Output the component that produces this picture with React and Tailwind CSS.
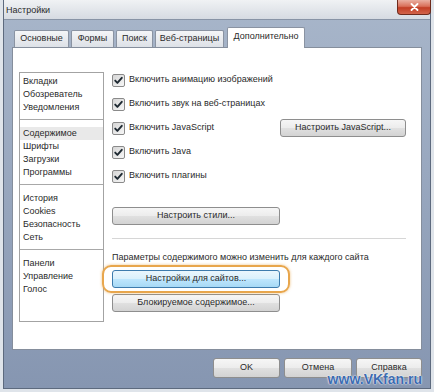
import React from "react";

function Check() {
  return (
    <div className="w-[13px] h-[13px] shrink-0 border border-[#8a8a8a] rounded-[2px] bg-gradient-to-br from-[#d6d6d6] to-[#f7f7f7] flex items-center justify-center">
      <svg width="11" height="11" viewBox="0 0 11 11">
        <path d="M2.2 5.6 L4.4 7.9 L8.8 2.8" fill="none" stroke="#1f2a33" strokeWidth="1.9" strokeLinecap="round" strokeLinejoin="round" />
      </svg>
    </div>
  );
}

function Btn({ children, className = "", blue = false }) {
  return (
    <div
      className={
        "h-[18px] flex items-center justify-center whitespace-nowrap rounded-[3px] border " +
        (blue
          ? "border-[#3d7bad] bg-[linear-gradient(#eaf6fd_0%,#d9f0fc_50%,#bee6fd_51%,#a7d9f5_100%)] "
          : "border-[#8e8e8e] bg-[linear-gradient(#f6f6f6_0%,#ececec_50%,#e0e0e0_51%,#d3d3d3_100%)] ") +
        className
      }
    >
      {children}
    </div>
  );
}

function Row({ children }) {
  return <div className="h-[24px] flex items-center whitespace-nowrap">{children}</div>;
}

const sections = [
  ["Вкладки", "Обозреватель", "Уведомления"],
  ["Содержимое", "Шрифты", "Загрузки", "Программы"],
  ["История", "Cookies", "Безопасность", "Сеть"],
  ["Панели", "Управление", "Голос"],
];

const tabCls =
  "h-[17px] mb-px border border-b-0 border-[#8a93a2] rounded-t-[2px] bg-gradient-to-b from-[#f4f5f7] to-[#dde1e7] flex items-center justify-center whitespace-nowrap";

export default function App() {
  return (
    <div className="w-[434px] h-[392px] bg-[#dfe4ea] px-[3px] pb-[3px] font-['Liberation_Sans',sans-serif] text-[9px] text-[#2a2a2a] relative overflow-hidden">
      <div className="h-full flex flex-col border border-t-0 border-[#5d6a7e] bg-gradient-to-b from-[#a8b6ca] to-[#8696b1]">
        {/* Title bar */}
        <div className="h-[20px] shrink-0 flex items-start justify-between bg-gradient-to-b from-[#f0f2f4] to-[#d6dbe2] border-b border-[#8894a6]">
          <span className="pl-[2px] pt-[4px] leading-[12px]">Настройки</span>
          <div className="w-[34px] h-[15px] -mr-px rounded-b-[4px] border border-t-0 border-[#6e2a1c] bg-[linear-gradient(#eab0a2_0%,#d9705a_45%,#c23e25_55%,#d2644a_100%)] flex items-center justify-center">
            <svg width="9" height="8" viewBox="0 0 9 8">
              <path d="M1.5 1 L7.5 7 M7.5 1 L1.5 7" stroke="#ffffff" strokeWidth="1.8" strokeLinecap="round" />
            </svg>
          </div>
        </div>

        {/* Body */}
        <div className="flex-1 flex flex-col px-[8px] pt-[7px]">
          {/* Tabs */}
          <div className="h-[21px] -mb-px flex items-end pl-[2px] relative z-10">
            <div className={tabCls + " w-[55px]"}>Основные</div>
            <div className={tabCls + " w-[43px] ml-[2px]"}>Формы</div>
            <div className={tabCls + " w-[37px] ml-[2px]"}>Поиск</div>
            <div className={tabCls + " w-[69px] ml-[2px]"}>Веб-страницы</div>
            <div className="w-[78px] h-[21px] ml-[3px] border border-b-0 border-[#8a93a2] rounded-t-[2px] bg-white flex items-center justify-center pb-[2px] whitespace-nowrap">Дополнительно</div>
          </div>

          {/* Panel */}
          <div className="h-[303px] shrink-0 bg-white border border-[#858e9c] flex items-start pl-[6px]">
            {/* List */}
            <div className="mt-[24px] w-[85px] h-[250px] border border-[#a3a3a3] flex flex-col">
              {sections.map((sec, i) => (
                <div key={i} className={(i > 0 ? "border-t border-[#a8a8a8] pt-[7px] " : "pt-[2px] ") + "pb-[5px]"}>
                  {sec.map((item) => (
                    <div
                      key={item}
                      className={
                        "h-[13px] leading-[13px] pl-[3px] whitespace-nowrap " + (item === "Содержимое" ? "bg-[#e9e9e9]" : "")
                      }
                    >
                      {item}
                    </div>
                  ))}
                </div>
              ))}
            </div>

            {/* Right column */}
            <div className="mt-[20px] ml-[8px] w-[294px] flex flex-col">
              <Row>
                <Check />
                <span className="ml-[4px]">Включить анимацию изображений</span>
              </Row>
              <Row>
                <Check />
                <span className="ml-[4px]">Включить звук на веб-страницах</span>
              </Row>
              <Row>
                <Check />
                <span className="ml-[4px]">Включить JavaScript</span>
                <Btn className="ml-auto w-[126px]">Настроить JavaScript...</Btn>
              </Row>
              <Row>
                <Check />
                <span className="ml-[4px]">Включить Java</span>
              </Row>
              <Row>
                <Check />
                <span className="ml-[4px]">Включить плагины</span>
              </Row>

              <Btn className="mt-[19px] w-[168px]">Настроить стили...</Btn>

              <div className="mt-[13px] h-px bg-[#d6d6d6]" />

              <div className="mt-[11px] leading-[14px] whitespace-nowrap">Параметры содержимого можно изменить для каждого сайта</div>

              <div className="mt-[6px] w-[168px] relative">
                <Btn blue className="w-[168px]">Настройки для сайтов...</Btn>
                <div className="absolute -left-[10px] -right-[10px] -top-[5px] -bottom-[5px] rounded-[9px] border-2 border-[#e8a64c] shadow-[0_0_3px_rgba(232,166,76,0.7)] pointer-events-none" />
              </div>

              <Btn className="mt-[6px] w-[168px]">Блокируемое содержимое...</Btn>
            </div>
          </div>

          {/* Bottom buttons */}
          <div className="mt-[8px] flex justify-end gap-[4px]">
            <Btn className="w-[67px] h-[20px]">OK</Btn>
            <Btn className="w-[68px] h-[20px]">Отмена</Btn>
            <Btn className="w-[66px] h-[20px]">Справка</Btn>
          </div>
        </div>
      </div>

      {/* Watermark */}
      <div className="absolute right-[12px] bottom-[5px] font-['Liberation_Sans',sans-serif] font-bold text-[14px] leading-[16px] text-[#3d6cb0] [text-shadow:0_0_2px_#ffffff,0_0_1px_#ffffff]">
        www.VKfan.ru
      </div>
    </div>
  );
}
